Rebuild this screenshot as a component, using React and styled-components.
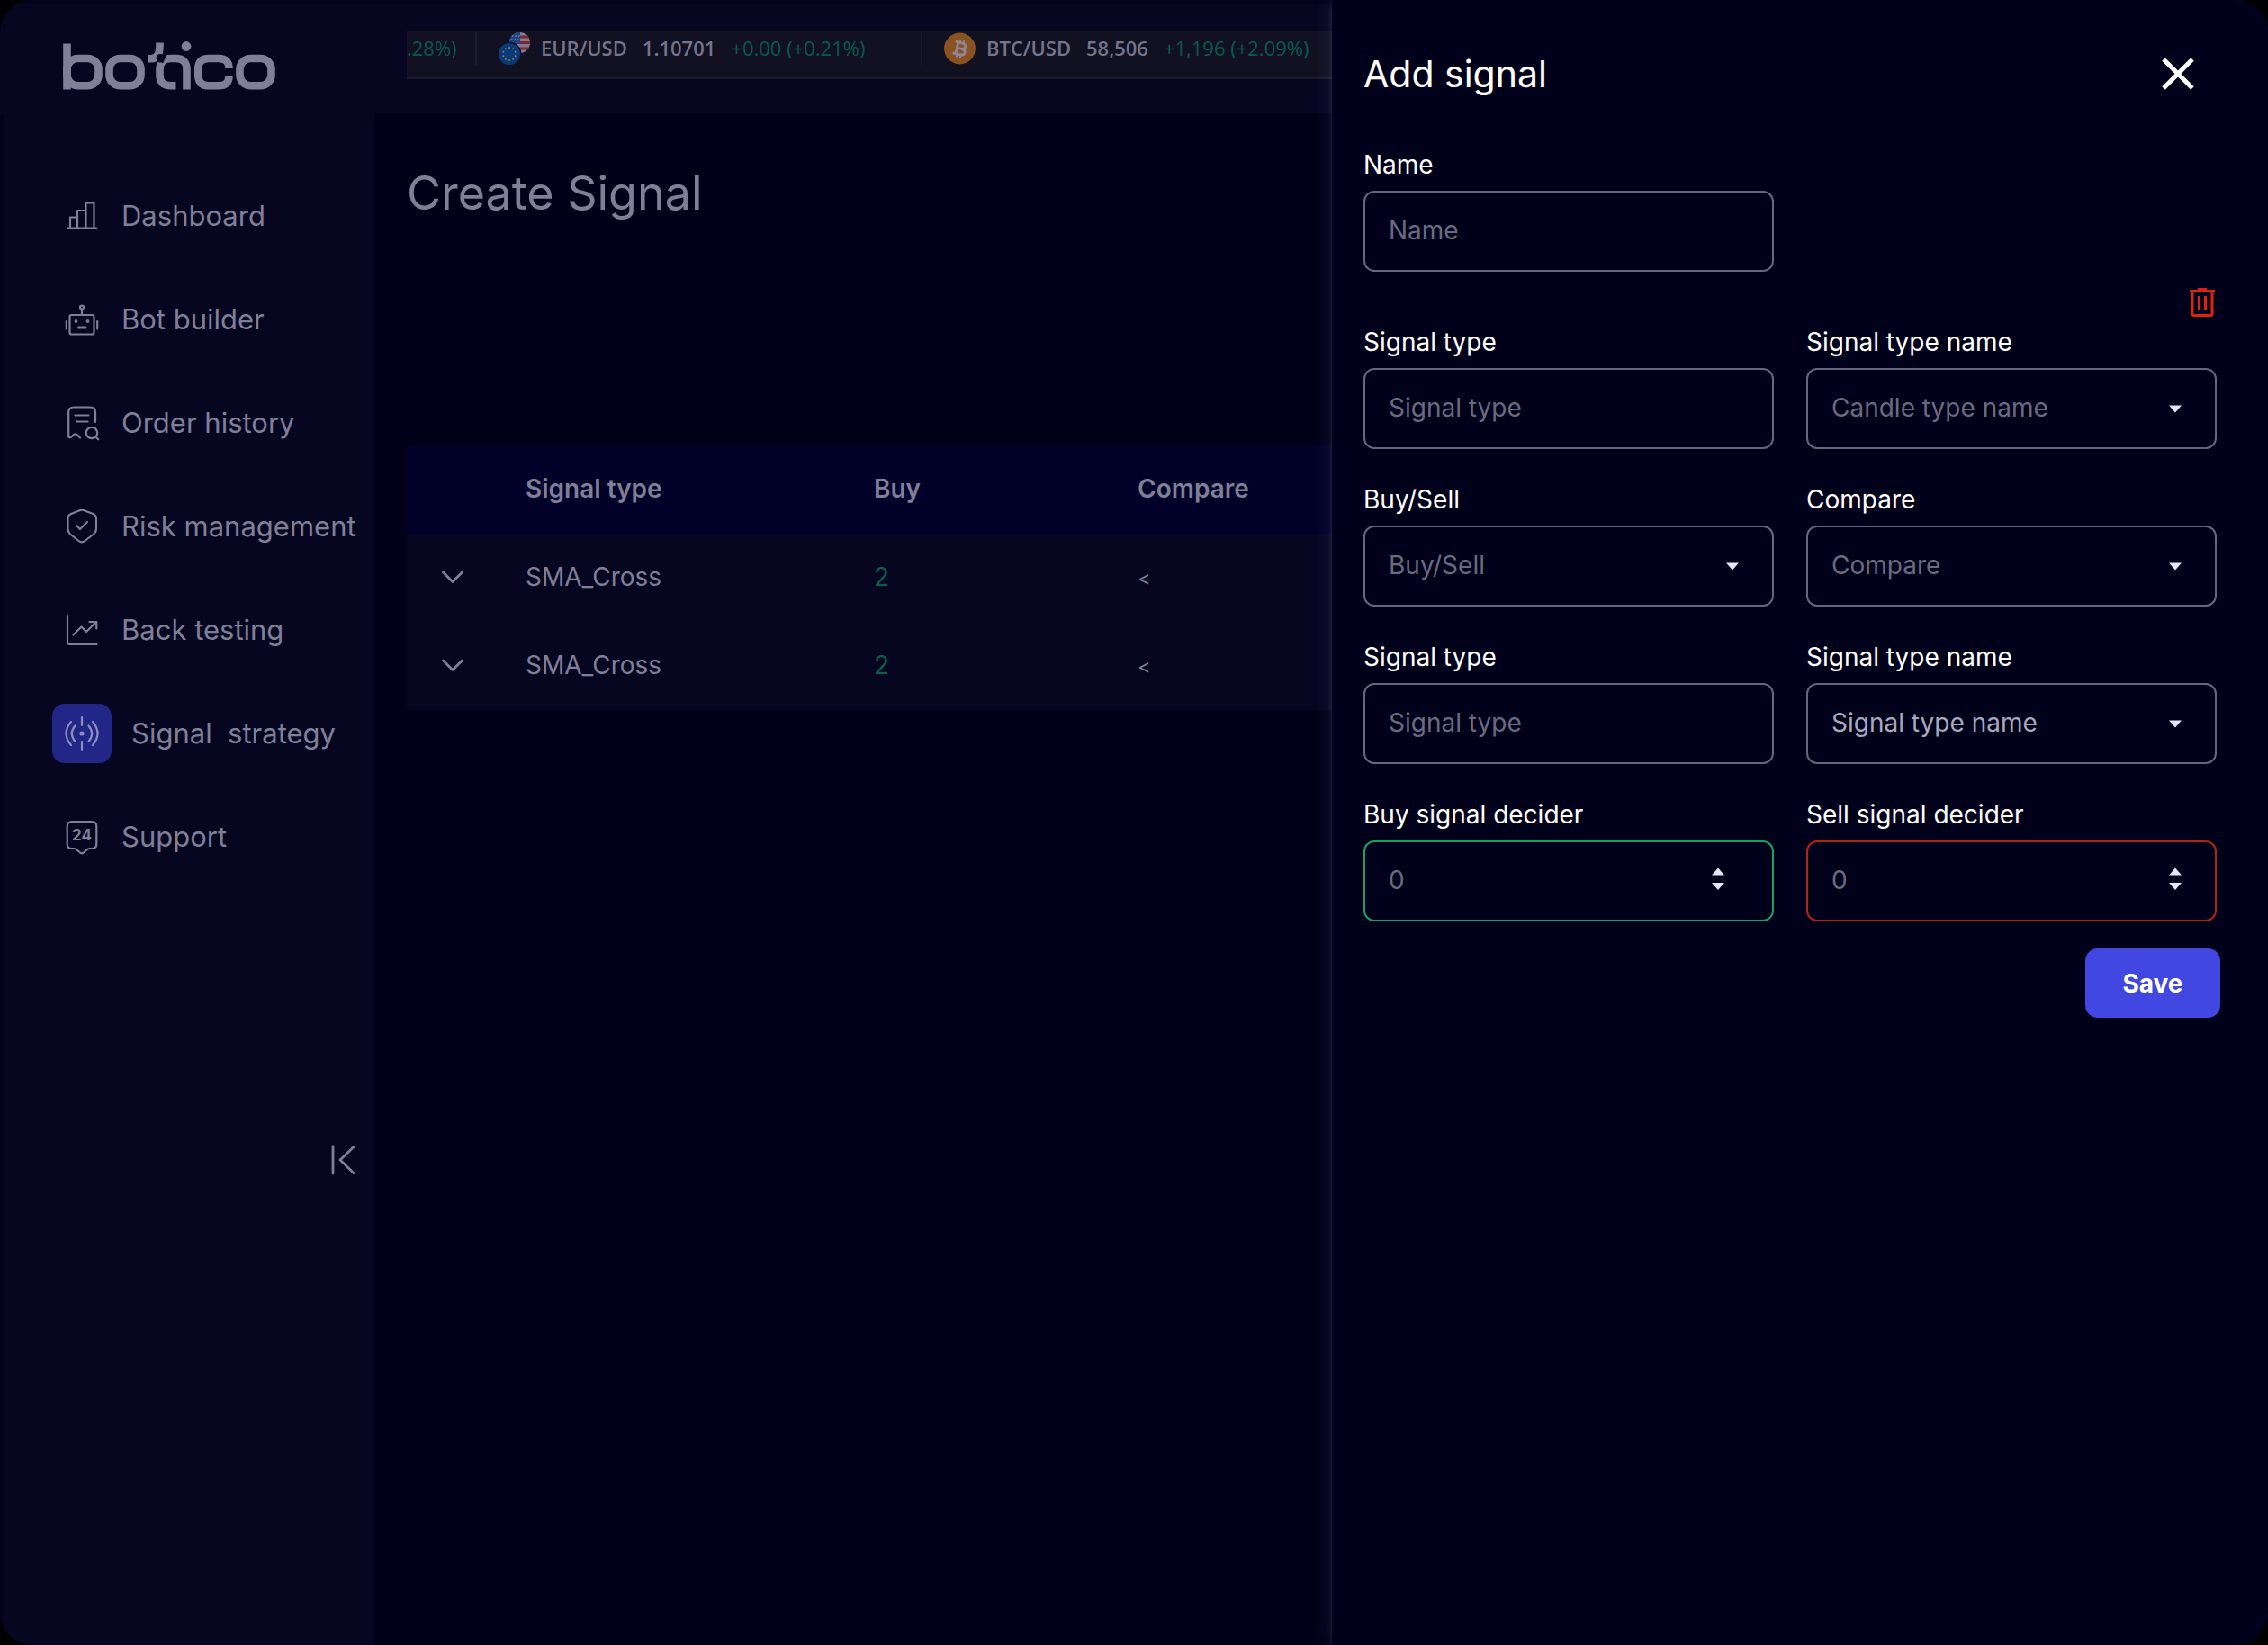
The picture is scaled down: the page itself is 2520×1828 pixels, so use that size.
import React, { useId } from "react";
import styled, { createGlobalStyle } from "styled-components";

const color = {
  base: "#000018",
  surface: "#060621",
  drawer: "#00001a",
  headRow: "#000028",
  dimText: "#807f98",
  dimGreen: "#0b5f4a",
  tickerGreen: "#0a594c",
  tickerText: "#74748b",
  accentDim: "#222687",
  accent: "#4147e0",
  border: "#67667c",
  placeholder: "#6b6a80",
  value: "#a9a9bd",
  arrow: "#e6e6fa",
  green: "#17a065",
  red: "#b2221a",
  danger: "#dd2211",
};

const GlobalStyle = createGlobalStyle`
  *, *::before, *::after { box-sizing: border-box; }
  body {
    margin: 0;
    background: #000;
    font-family: Inter, "Liberation Sans", sans-serif;
    font-size: 28px;
    color: ${color.dimText};
  }
  button, input, select { font: inherit; color: inherit; }
`;

const Frame = styled.div`
  position: relative;
  display: grid;
  grid-template-columns: 416px minmax(0, 1fr);
  grid-template-rows: 126px 1fr;
  min-height: 100vh;
  overflow: hidden;
  border-radius: 36px;
  background: ${color.base};
`;

const TopBar = styled.header`
  grid-column: 1 / -1;
  display: grid;
  grid-template-columns: subgrid;
  align-items: start;
  border-top: 4px solid #02021c;
  background: ${color.surface};
`;

const LogoLink = styled.a`
  display: block;
  padding: 42px 0 0 70px;
  svg { display: block; }
`;

const Ticker = styled.div`
  display: flex;
  align-items: flex-start;
  height: 54px;
  margin: 30px 0 0 36px;
  padding-top: 2px;
  overflow: hidden;
  border-bottom: 2px solid #1b1b2c;
  background: #111122;
  font-family: "Open Sans", "Noto Sans", sans-serif;
  font-size: 22px;
  line-height: 34px;
  white-space: nowrap;
  color: ${color.tickerText};
`;

const Quote = styled.div`
  display: flex;
  align-items: flex-start;
  flex: none;
  min-width: ${(p) => (p.$partial ? "78px" : "495px")};
  height: 36px;
  padding-left: ${(p) => (p.$partial ? "0" : "24px")};
  border-right: 2px solid #1b1b2e;
  svg { flex: none; margin-right: 12px; }
`;

const Pair = styled.span`
  margin-right: 17px;
  font-weight: 600;
`;

const Change = styled.span`
  color: ${color.tickerGreen};
`;

const Sidebar = styled.aside`
  display: flex;
  flex-direction: column;
  border-left: 4px solid #02021c;
  background: ${color.surface};
`;

const NavList = styled.ul`
  display: flex;
  flex-direction: column;
  gap: 50px;
  margin: 0;
  padding: 81px 0 0 54px;
  list-style: none;
  > li + li { margin-top: -1px; }
`;

const NavLink = styled.a`
  display: flex;
  align-items: center;
  gap: ${(p) => (p.$active ? "22px" : "11px")};
  height: 66px;
  font-size: 31px;
  line-height: 40px;
  white-space: pre;
  text-decoration: none;
  color: ${color.dimText};
`;

const NavIcon = styled.span`
  display: grid;
  place-items: center;
  width: 66px;
  height: 66px;
  border-radius: 14px;
  background: ${(p) => (p.$active ? color.accentDim : "transparent")};
  svg { display: block; }
`;

const CollapseButton = styled.button`
  align-self: flex-end;
  display: block;
  margin: 306px 18px 0 0;
  padding: 0;
  border: 0;
  background: none;
  svg { display: block; }
`;

const Main = styled.main`
  padding: 56px 0 0 36px;
`;

const PageTitle = styled.h1`
  margin: 0 0 247px;
  font-size: 52px;
  font-weight: 400;
  line-height: 66px;
`;

const Table = styled.table`
  width: 100%;
  table-layout: fixed;
  border-collapse: collapse;
  line-height: 34px;
`;

const HeadCell = styled.th`
  width: ${(p) => p.$w || "auto"};
  height: 98px;
  padding: 0 0 2px;
  vertical-align: middle;
  text-align: left;
  font-weight: 600;
  background: ${color.headRow};
`;

const Cell = styled.td`
  height: 98px;
  padding: 0 0 2px;
  vertical-align: middle;
  background: ${color.surface};
  color: ${(p) => (p.$buy ? color.dimGreen : "inherit")};
`;

const Operator = styled.span`
  font-size: 22px;
`;

const RowToggle = styled.button`
  display: block;
  margin-left: 38px;
  padding: 0;
  border: 0;
  background: none;
  svg { display: block; }
`;

const Drawer = styled.section`
  position: absolute;
  top: 0;
  right: 0;
  bottom: 0;
  width: 1040px;
  max-width: 100%;
  padding: 54px 53px 0 35px;
  background: ${color.drawer};
  box-shadow: -1px 0 3px rgba(255, 255, 255, 0.07), 0 0 20px rgba(170, 170, 255, 0.15);
  color: #fff;
`;

const DrawerHeader = styled.div`
  display: flex;
  align-items: center;
  justify-content: space-between;
  height: 56px;
  padding-right: 28px;
`;

const DrawerTitle = styled.h2`
  margin: 0;
  font-size: 41px;
  font-weight: 400;
  line-height: 56px;
`;

const IconButton = styled.button`
  display: block;
  padding: 0;
  border: 0;
  background: none;
  svg { display: block; }
`;

const Form = styled.form`
  display: flex;
  flex-direction: column;
  margin-top: 56px;
`;

const Fields = styled.div`
  display: grid;
  grid-template-columns: repeat(2, minmax(0, 1fr));
  gap: 39px 36px;
  padding-right: 4px;
`;

const DeleteRow = styled.div`
  display: flex;
  justify-content: flex-end;
  padding: 18px 5px 11px 0;
`;

const FieldWrap = styled.div`
  display: flex;
  flex-direction: column;
  gap: 12px;
`;

const Label = styled.label`
  line-height: 34px;
`;

const ControlBox = styled.div`
  display: grid;
  align-items: center;
  height: 90px;
  border: 2px solid ${(p) => p.$tone || color.border};
  border-radius: 12px;
  > * { grid-area: 1 / 1; }
`;

const TextInput = styled.input`
  width: 100%;
  height: 100%;
  padding: 0 26px 2px;
  border: 0;
  border-radius: 10px;
  outline: none;
  background: transparent;
  color: #fff;
  appearance: textfield;
  &::placeholder { color: ${color.placeholder}; opacity: 1; }
  &::-webkit-inner-spin-button, &::-webkit-outer-spin-button { appearance: none; margin: 0; }
`;

const Select = styled.select`
  width: 100%;
  height: 100%;
  padding: 0 26px 2px;
  border: 0;
  border-radius: 10px;
  outline: none;
  background: transparent;
  appearance: none;
  color: ${(p) => (p.$filled ? color.value : color.placeholder)};
`;

const Arrow = styled.svg`
  justify-self: end;
  margin-right: ${(p) => (p.$inset ? "52px" : "36px")};
  fill: ${color.arrow};
  pointer-events: none;
`;

const SaveButton = styled.button`
  align-self: flex-end;
  width: 150px;
  height: 77px;
  margin-top: 30px;
  border: 0;
  border-radius: 14px;
  background: ${color.accent};
  color: #fff;
  font-weight: 700;
`;

/* ---------- drawings ---------- */

function Logo() {
  return (
    <svg width="237" height="54" viewBox="70 46.5 237 54" fill="none" stroke={color.dimText} strokeWidth="8.6" role="img" aria-label="botico">
      <path d="M74.5 49V100" />
      <rect x="74.5" y="65.5" width="35" height="30.3" rx="12" />
      <rect x="121.5" y="65.5" width="35" height="30.3" rx="12" />
      <path d="M195.5 95.8H190Q177.500 95.8 177.5 84V78Q177.5 65.5 190 65.5H195.500Q207.5 65.5 207.5 78V100" />
      <path d="M182 58L177 69" stroke={color.surface} strokeWidth="9" />
      <circle cx="177" cy="65" r="5" fill={color.surface} stroke="none" />
      <path d="M177.5 48V52Q177.5 65.5 168 65.8H164" />
      <circle cx="178" cy="65" r="4.5" fill={color.surface} stroke="none" />
      <circle cx="207" cy="52" r="5.4" fill={color.dimText} stroke="none" />
      <path d="M254.5 76.5Q254.5 65.5 243 65.5H232Q220.3 65.5 220.3 77V84Q220.3 95.8 232 95.8H243Q254.5 95.8 254.5 85" />
      <rect x="266.5" y="65.5" width="35" height="30.3" rx="12" />
    </svg>
  );
}

const LineIcon = styled.svg.attrs({ width: 40, height: 40, viewBox: "0 0 40 40" })`
  fill: none;
  stroke: ${(p) => p.$stroke || color.dimText};
  stroke-width: 2.2;
  stroke-linecap: round;
  stroke-linejoin: round;
`;

const icons = {
  dashboard: (
    <LineIcon>
      <path d="M4 33.5H36M7 33V21.5H15M15 33V14H24M24.5 33V5.5H33.5V33" />
    </LineIcon>
  ),
  bot: (
    <LineIcon>
      <circle cx="20" cy="6.5" r="2" />
      <path d="M20 9V14.5M2.8 22V30.5M37.2 22V30.5" />
      <rect x="6.5" y="15" width="27" height="21.5" rx="2" />
      <path d="M16.5 29H24" strokeWidth="3.2" />
      <circle cx="13.5" cy="22" r="0.8" />
      <circle cx="26.5" cy="22" r="0.8" />
    </LineIcon>
  ),
  history: (
    <LineIcon>
      <path d="M35 19V8Q35 2.5 29.5 2.5H11Q5.2 2.5 5.2 8V35.5Q7.5 37 9.5 34.5Q12.5 30.5 15.5 34L18 36.5" />
      <path d="M12.5 11.5H27.5M14 18.5H26.5" />
      <circle cx="31" cy="31" r="6.2" />
      <path d="M35.5 35.5L38.2 38.2" />
    </LineIcon>
  ),
  shield: (
    <LineIcon>
      <path d="M17.5 2.3Q20 1.2 22.5 2.3L32.5 6Q36 7.5 36 11V22.5Q36 26 33 28.5L23.5 36Q20 38.8 16.5 36L7 28.5Q4.5 26 4.5 22.5V11Q4.5 7.5 8 6Z" />
      <path d="M14 19L18 23L26 15" />
    </LineIcon>
  ),
  chart: (
    <LineIcon>
      <path d="M4 4V33.5Q4 36 6.5 36H36.5" />
      <path d="M10.5 25.5L19.5 16.5L25 22L36 11M28.5 11H36.3V18.5" />
    </LineIcon>
  ),
  signal: (
    <LineIcon $stroke="#8d8dbb">
      <path d="M20 2V11M20 29V38" />
      <path d="M12.5 11.5Q5 20 12.5 29M8 7Q-3 20 8 33M27.5 11.5Q35 20 27.5 29M32 7Q43 20 32 33" />
      <circle cx="20" cy="20" r="1.5" fill="#8d8dbb" />
    </LineIcon>
  ),
  support: (
    <LineIcon>
      <path d="M9 3H31Q36.3 3 36.3 8V28Q36.3 33 31 33H29Q27 33 25.5 34.5L22.5 37Q20 39.5 17.5 37L14.5 34.5Q13 33 11 33H9Q3.7 33 3.7 28V8Q3.7 3 9 3Z" />
      <text x="20" y="24" textAnchor="middle" fontSize="17" fontWeight="700" fill={color.dimText} stroke="none">24</text>
    </LineIcon>
  ),
};

function EurUsdIcon() {
  const stars = Array.from({ length: 10 }, (_, i) => {
    const a = (i / 10) * Math.PI * 2;
    return <circle key={i} cx={12 + Math.sin(a) * 7} cy={24 - Math.cos(a) * 7} r="1" fill="#8a8030" />;
  });
  return (
    <svg width="35" height="36" viewBox="0 0 35 36">
      <clipPath id="usd"><circle cx="23.5" cy="11.5" r="11.5" /></clipPath>
      <g clipPath="url(#usd)">
        <rect x="12" width="23" height="24" fill="#85798c" />
        <path d="M12 5H35M12 11.5H35M12 18H35" stroke="#7d2535" strokeWidth="3.2" />
        <rect x="12" width="12" height="13" fill="#1d4583" />
        <path d="M15 4H24M14 8H24" stroke="#6e7fa8" strokeWidth="1.4" strokeDasharray="1.5 2" />
      </g>
      <circle cx="12" cy="24" r="13.5" fill="#111122" />
      <circle cx="12" cy="24" r="12" fill="#0b3a7c" />
      {stars}
    </svg>
  );
}

function BtcIcon() {
  return (
    <svg width="35" height="36" viewBox="0 0 35 36">
      <circle cx="17.5" cy="18" r="17.4" fill="#8a5220" />
      <g transform="rotate(13 17.5 18)" fill="none" stroke="#8f8698" strokeWidth="2.8">
        <path d="M11 11.5H18.5Q23 11.5 23 14.7Q23 17.9 18.5 17.9H14M18.5 17.9Q24 17.9 24 21.2Q24 24.6 18.5 24.6H11M14.3 11.5V24.6" />
        <path d="M16 8V11M20 8V11M16 25V28M20 25V28" strokeWidth="2" />
      </g>
    </svg>
  );
}

const Chevron = () => (
  <svg width="26" height="16" viewBox="0 0 26 16" fill="none" stroke={color.dimText} strokeWidth="2.8" strokeLinecap="round" strokeLinejoin="round">
    <path d="M2.5 3L13 13.5L23.5 3" />
  </svg>
);

/* ---------- form parts ---------- */

function TextField({ label, placeholder }) {
  const id = useId();
  return (
    <FieldWrap>
      <Label htmlFor={id}>{label}</Label>
      <ControlBox>
        <TextInput id={id} type="text" placeholder={placeholder} />
      </ControlBox>
    </FieldWrap>
  );
}

function SelectField({ label, value, filled }) {
  const id = useId();
  return (
    <FieldWrap>
      <Label htmlFor={id}>{label}</Label>
      <ControlBox>
        <Select id={id} $filled={filled}>
          <option>{value}</option>
        </Select>
        <Arrow width="16" height="9" viewBox="0 0 16 9" aria-hidden="true">
          <path d="M1 0.5H15L8 8.5Z" />
        </Arrow>
      </ControlBox>
    </FieldWrap>
  );
}

function NumberField({ label, tone, inset }) {
  const id = useId();
  return (
    <FieldWrap>
      <Label htmlFor={id}>{label}</Label>
      <ControlBox $tone={tone}>
        <TextInput id={id} type="number" placeholder="0" />
        <Arrow $inset={inset} width="16" height="30" viewBox="0 0 16 30" aria-hidden="true">
          <path d="M8 0.5L15 8.5H1ZM1 17H15L8 25Z" />
        </Arrow>
      </ControlBox>
    </FieldWrap>
  );
}

const navItems = [
  { icon: "dashboard", label: "Dashboard" },
  { icon: "bot", label: "Bot builder" },
  { icon: "history", label: "Order history" },
  { icon: "shield", label: "Risk management" },
  { icon: "chart", label: "Back testing" },
  { icon: "signal", label: "Signal  strategy", active: true },
  { icon: "support", label: "Support" },
];

const rows = [
  { id: 1, type: "SMA_Cross", buy: "2", compare: "<" },
  { id: 2, type: "SMA_Cross", buy: "2", compare: "<" },
];

export default function App() {
  return (
    <>
      <GlobalStyle />
      <Frame>
        <TopBar>
          <LogoLink href="#"><Logo /></LogoLink>
          <Ticker>
            <Quote $partial><Change>.28%)</Change></Quote>
            <Quote>
              <EurUsdIcon />
              <Pair>EUR/USD</Pair>
              <Pair>1.10701</Pair>
              <Change>+0.00 (+0.21%)</Change>
            </Quote>
            <Quote>
              <BtcIcon />
              <Pair>BTC/USD</Pair>
              <Pair>58,506</Pair>
              <Change>+1,196 (+2.09%)</Change>
            </Quote>
          </Ticker>
        </TopBar>

        <Sidebar>
          <nav>
            <NavList>
              {navItems.map((item) => (
                <li key={item.label}>
                  <NavLink href="#" $active={item.active}>
                    <NavIcon $active={item.active}>{icons[item.icon]}</NavIcon>
                    {item.label}
                  </NavLink>
                </li>
              ))}
            </NavList>
          </nav>
          <CollapseButton type="button" aria-label="Collapse menu">
            <svg width="32" height="40" viewBox="0 0 32 40" fill="none" stroke={color.dimText} strokeWidth="2.8" strokeLinecap="round" strokeLinejoin="round">
              <path d="M4 5V35M27 5.5L12 20L27 34.5" />
            </svg>
          </CollapseButton>
        </Sidebar>

        <Main>
          <PageTitle>Create Signal</PageTitle>
          <Table>
            <thead>
              <tr>
                <HeadCell $w="132px" aria-label="Expand" />
                <HeadCell $w="387px">Signal type</HeadCell>
                <HeadCell $w="293px">Buy</HeadCell>
                <HeadCell>Compare</HeadCell>
              </tr>
            </thead>
            <tbody>
              {rows.map((row) => (
                <tr key={row.id}>
                  <Cell>
                    <RowToggle type="button" aria-label="Expand row"><Chevron /></RowToggle>
                  </Cell>
                  <Cell>{row.type}</Cell>
                  <Cell $buy>{row.buy}</Cell>
                  <Cell><Operator>{row.compare}</Operator></Cell>
                </tr>
              ))}
            </tbody>
          </Table>
        </Main>

        <Drawer aria-labelledby="drawer-title">
          <DrawerHeader>
            <DrawerTitle id="drawer-title">Add signal</DrawerTitle>
            <IconButton type="button" aria-label="Close">
              <svg width="38" height="38" viewBox="0 0 38 38" stroke="#fff" strokeWidth="5">
                <path d="M3 3L35 35M35 3L3 35" />
              </svg>
            </IconButton>
          </DrawerHeader>
          <Form>
            <Fields>
              <TextField label="Name" placeholder="Name" />
            </Fields>
            <DeleteRow>
              <IconButton type="button" aria-label="Delete condition">
                <svg width="30" height="32" viewBox="0 0 30 32" fill="none" stroke={color.danger} strokeWidth="3">
                  <path d="M1 3.5H29" />
                  <path d="M10 1.5H20" />
                  <path d="M4 4V28.5Q4 30.5 6 30.5H24Q26 30.5 26 28.5V4" />
                  <path d="M11.5 9V25M18.5 9V25" />
                </svg>
              </IconButton>
            </DeleteRow>
            <Fields>
              <TextField label="Signal type" placeholder="Signal type" />
              <SelectField label="Signal type name" value="Candle type name" />
              <SelectField label="Buy/Sell" value="Buy/Sell" />
              <SelectField label="Compare" value="Compare" />
              <TextField label="Signal type" placeholder="Signal type" />
              <SelectField label="Signal type name" value="Signal type name" filled />
              <NumberField label="Buy signal decider" tone={color.green} inset />
              <NumberField label="Sell signal decider" tone={color.red} />
            </Fields>
            <SaveButton type="submit">Save</SaveButton>
          </Form>
        </Drawer>
      </Frame>
    </>
  );
}
